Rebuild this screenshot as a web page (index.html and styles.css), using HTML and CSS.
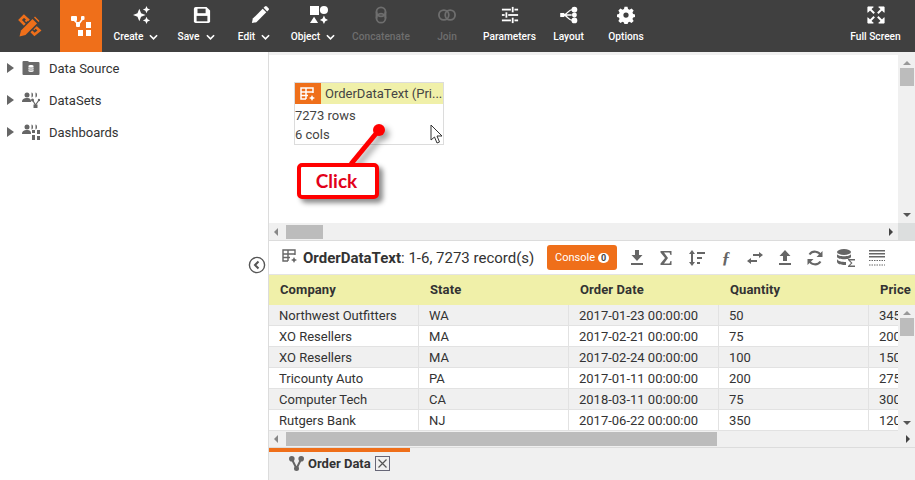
FILE: index.html
```html
<!DOCTYPE html>
<html lang="en">
<head>
<meta charset="utf-8">
<title>Order Data</title>
<link rel="stylesheet" href="styles.css">
</head>
<body>
<div class="app">
  <header class="toolbar">
    <div class="logo">
      <svg width="24" height="24" viewBox="0 0 24 24"><path d="M6 2L2 6l14.500 14.500 5-4z" fill="none" stroke="#ef6f1a" stroke-width="2.600"/><path d="M10 5L7.500 7.500M18 13l-2.500 2.500" stroke="#ef6f1a" stroke-width="2"/><path d="M0 24l1.500-8L16 1.500 23 8 8 22.500z" fill="#404040"/><path d="M1.500 22.500l1.500-6L14.500 5l4.500 4.500L7.500 21z" fill="#ef6f1a"/><path d="M16 3.500l1-1 4.500 4.500-1 1z" fill="#ef6f1a"/></svg>
    </div>
    <div class="home">
      <svg width="21" height="20" viewBox="0 0 21 20" fill="#fff"><rect x="0" y="0" width="6" height="5" rx="1"/><rect x="10" y="0" width="3.500" height="4" rx="1"/><rect x="5" y="6" width="4" height="5" rx="1"/><path d="M3 4l4 4M11.500 3L7 9" stroke="#fff" stroke-width="1.600"/><rect x="7" y="14" width="5" height="6"/><rect x="15" y="6" width="5" height="6"/><rect x="15" y="14" width="5" height="6"/></svg>
    </div>
    <div class="tools">
      <div class="tool w-create"><svg class="ti nudge" viewBox="0 0 20 20" fill="#fff"><path d="M7 3l2 5 5 2-5 2-2 5-2-5-5-2 5-2z"/><path d="M15 0l1.200 2.800L19 4l-2.800 1.200L15 8l-1.200-2.800L11 4l2.800-1.200zM15 12l1.200 2.800L19 16l-2.800 1.200L15 20l-1.200-2.800L11 16l2.800-1.200z"/></svg><span class="tl">Create <svg class="chev" viewBox="0 0 10 6"><path d="M1 1l4 4 4-4"/></svg></span></div>
      <div class="tool w-save"><svg class="ti nudge" viewBox="0 0 20 20"><path d="M3 1h12l4 4v12a2 2 0 0 1-2 2H3a2 2 0 0 1-2-2V3a2 2 0 0 1 2-2z" fill="#fff"/><rect x="5" y="3" width="9" height="5" fill="#404040"/><rect x="4" y="11" width="12" height="6" fill="#404040"/></svg><span class="tl">Save <svg class="chev" viewBox="0 0 10 6"><path d="M1 1l4 4 4-4"/></svg></span></div>
      <div class="tool w-edit"><svg class="ti nudge" viewBox="0 0 20 20" fill="#fff"><path d="M1 19l1-5L13 3l4 4L6 18z"/><path d="M14 2l1.500-1.500a1.500 1.500 0 0 1 2 0l2 2a1.500 1.500 0 0 1 0 2L18 6z"/></svg><span class="tl">Edit <svg class="chev" viewBox="0 0 10 6"><path d="M1 1l4 4 4-4"/></svg></span></div>
      <div class="tool w-object"><svg class="ti nudge" viewBox="0 0 20 20" fill="#fff"><rect x="0" y="0" width="10" height="10"/><circle cx="15.500" cy="4.500" r="4.500"/><path d="M0 19l4.500-7 4.500 7z"/><path d="M15.500 10.500l1.500 3.500 3 1.500-3 1.500-1.500 3-1.500-3-3-1.500 3-1.500z"/></svg><span class="tl">Object <svg class="chev" viewBox="0 0 10 6"><path d="M1 1l4 4 4-4"/></svg></span></div>
      <div class="tool w-conc off"><svg class="ti" viewBox="0 0 20 20" fill="none" stroke="#6e6e6e" stroke-width="2"><circle cx="10" cy="6.500" r="5"/><circle cx="10" cy="13.500" r="5"/><path d="M5 6.500v7M15 6.500v7"/></svg><span class="tl">Concatenate</span></div>
      <div class="tool w-join off"><svg class="ti" viewBox="0 0 20 20" fill="none" stroke="#6e6e6e" stroke-width="2"><circle cx="6.500" cy="10" r="5.500"/><circle cx="13.500" cy="10" r="5.500"/></svg><span class="tl">Join</span></div>
      <div class="tool w-param"><svg class="ti" viewBox="0 0 20 20" fill="#fff"><rect x="1" y="3" width="10" height="2"/><rect x="12" y="1" width="2" height="6"/><rect x="15" y="3" width="4" height="2"/><rect x="1" y="9" width="3" height="2"/><rect x="5" y="7" width="2" height="6"/><rect x="8" y="9" width="11" height="2"/><rect x="1" y="15" width="10" height="2"/><rect x="12" y="13" width="2" height="6"/><rect x="15" y="15" width="4" height="2"/></svg><span class="tl">Parameters</span></div>
      <div class="tool w-layout"><svg class="ti" viewBox="0 0 20 20" fill="none" stroke="#fff" stroke-width="1.500"><path d="M4 10C9 9 9 4 14 4M4 10c5 1 5 6 10 6M4 10h9"/><rect x="1" y="8.500" width="3" height="3" fill="#fff"/><circle cx="16" cy="4" r="2.500" fill="#fff"/><circle cx="16" cy="10" r="2" fill="#fff"/><circle cx="16" cy="16" r="2.500" fill="#fff"/></svg><span class="tl">Layout</span></div>
      <div class="tool w-opt"><svg class="ti" viewBox="0 0 24 24"><path fill="#fff" fill-rule="evenodd" d="M10 1h4l.7 3 2 .9 2.700-1.600 2.800 2.800-1.600 2.700.9 2 3 .7v3l-3 .7-.9 2 1.600 2.700-2.800 2.800-2.700-1.600-2 .9-.7 3h-4l-.7-3-2-.9-2.700 1.600-2.800-2.800 1.600-2.700-.9-2-3-.7v-3l3-.7.9-2-1.600-2.700 2.800-2.800 2.700 1.600 2-.9zM12 8.500a3.500 3.500 0 1 0 0 7 3.500 3.500 0 0 0 0-7z"/></svg><span class="tl">Options</span></div>
      <div class="tool w-full"><svg class="ti" viewBox="0 0 20 20" fill="#fff" stroke="#fff"><path d="M1 1h6L1 7z"/><path d="M3 3l5 5" stroke-width="2.200"/><path d="M19 1h-6l6 6z"/><path d="M17 3l-5 5" stroke-width="2.200"/><path d="M1 19h6l-6-6z"/><path d="M3 17l5-5" stroke-width="2.200"/><path d="M19 19h-6l6-6z"/><path d="M17 17l-5-5" stroke-width="2.200"/></svg><span class="tl">Full Screen</span></div>
    </div>
  </header>

  <div class="main">
    <aside class="sidebar">
      <div class="tree-row"><span class="caret"></span>
        <svg class="tree-icon" width="17" height="14" viewBox="0 0 17 14"><path d="M0 1a1 1 0 0 1 1-1h4l2 1h9a1 1 0 0 1 1 1v11a1 1 0 0 1-1 1H1a1 1 0 0 1-1-1z" fill="#6a6a6a"/><path d="M6 5c0-1.200 5-1.200 5 0v5c0 1.200-5 1.200-5 0z" fill="#fff"/><path d="M6 6.500c1 .8 4 .8 5 0M6 8.500c1 .8 4 .8 5 0" stroke="#6a6a6a" stroke-width=".8" fill="none"/></svg>
        <span>Data Source</span></div>
      <div class="tree-row"><span class="caret"></span>
        <svg class="tree-icon" width="18" height="16" viewBox="0 0 18 16" fill="#666"><circle cx="5" cy="3" r="2.500"/><path d="M0 10c0-3 2-4 5-4s4 1 4 4z"/><path d="M9.500 .5c2 0 2 5 0 5zM13.500 .5c2 0 2 5 0 5z"/><circle cx="10.500" cy="8" r="1.500"/><circle cx="17" cy="8" r="1.200"/><rect x="11.500" y="12.500" width="4" height="3.500"/><path d="M10.500 8l3 5M17 8l-3.500 5" stroke="#666" stroke-width="1.200"/></svg>
        <span>DataSets</span></div>
      <div class="tree-row"><span class="caret"></span>
        <svg class="tree-icon" width="18" height="16" viewBox="0 0 18 16" fill="#666"><circle cx="5" cy="3" r="2.500"/><path d="M0 10c0-3 2-4 5-4s4 1 4 4z"/><path d="M9.500 .5c2 0 2 5 0 5zM13.500 .5c2 0 2 5 0 5z"/><rect x="10" y="6" width="3" height="3"/><rect x="15" y="6" width="3" height="4"/><rect x="10" y="11" width="3" height="5"/><rect x="15" y="12" width="3" height="4"/></svg>
        <span>Dashboards</span></div>
      <svg class="collapse" width="18" height="18" viewBox="0 0 18 18" fill="none" stroke="#555"><circle cx="9" cy="9" r="7.600" stroke-width="1.400"/><path d="M10.500 5.500L7 9l3.500 3.500" stroke-width="2"/></svg>
    </aside>

    <section class="content">
      <div class="strip"></div>
      <div class="canvas">
        <div class="canvas-area">
          <div class="node">
            <div class="node-head">
              <span class="node-icon"><svg width="16" height="14" viewBox="0 0 16 14" fill="none" stroke="#fff" stroke-width="1.500"><path d="M6 12H1V1h12v5M1 5h12M1 8.500h7M6 1v11"/><path d="M12 8l1 2 2 1-2 1-1 2-1-2-2-1 2-1z" fill="#fff" stroke="none"/></svg></span>
              <span class="node-title">OrderDataText (Pri...</span>
            </div>
            <div class="node-line">7273 rows</div>
            <div class="node-line">6 cols</div>
            <svg class="cursor" width="14" height="20" viewBox="0 0 14 20"><path d="M1 1v15l3.500-3 2.500 6 2.500-1-2.500-6h5z" fill="#fff" stroke="#333"/></svg>
          </div>
          <svg class="pointer" width="50" height="50" viewBox="0 0 50 50"><path d="M42 8L14 42" stroke="#f00" stroke-width="5" fill="none"/><circle cx="42" cy="8" r="6" fill="#f00"/></svg>
          <div class="callout">Click</div>
        </div>
        <div class="vbar"><span class="arr-up"></span><span class="vthumb top"></span><span class="vfill"></span><span class="arr-down"></span></div>
        <div class="hbar"><span class="arr-left"></span><span class="hthumb small"></span><span class="hfill"></span><span class="arr-right"></span></div>
        <div class="corner"></div>
      </div>

      <div class="grid-bar">
        <svg class="gi-title" width="15" height="15" viewBox="0 0 15 15" fill="none" stroke="#666" stroke-width="1.400"><path d="M6 12H1V1h12v5M1 5h12M1 8.500h7M6 1v11"/><path d="M12 8l1 2 2 1-2 1-1 2-1-2-2-1 2-1z" fill="#666" stroke="none"/></svg>
        <div class="grid-title"><b>OrderDataText</b>: 1-6, 7273 record(s)</div>
        <div class="console">Console <span class="badge">0</span></div>
        <div class="gtools">
          <svg width="16" height="16" viewBox="0 0 16 16" fill="#666"><path d="M6 0h4v5h3.500L8 11 2.500 5H6z"/><rect x="2" y="13" width="12" height="2"/></svg>
          <svg width="14" height="16" viewBox="0 0 14 16" fill="#666"><path d="M1.500 1h11v4h-1l-1-2.500H5L9 8l-4 5.500h5.500l1-2.500h1v4h-11v-1.500L6 8 1.500 2.500z"/></svg>
          <svg width="18" height="16" viewBox="0 0 18 16" fill="#666"><path d="M5 0l3 4H6v8h2l-3 4-3-4h2V4H2z"/><rect x="10" y="2" width="8" height="2"/><rect x="10" y="7" width="5" height="2"/><rect x="10" y="12" width="3" height="2"/></svg>
          <span class="func">ƒ</span>
          <svg width="16" height="12" viewBox="0 0 16 12" fill="#666"><path d="M16 3l-4-3v2H6v2h6v2zM0 9l4 3v-2h6V8H4V6z"/></svg>
          <svg width="16" height="16" viewBox="0 0 16 16" fill="#666"><path d="M8 0l5.500 6H10v5H6V6H2.500z"/><rect x="2" y="13" width="12" height="2"/></svg>
          <svg width="16" height="16" viewBox="0 0 16 16" fill="none" stroke="#666" stroke-width="2.200"><path d="M14 6A6.500 6.500 0 0 0 2.500 4.500M2 10a6.500 6.500 0 0 0 11.500 1.500"/><path d="M15.500 1v6h-6zM.5 15V9h6z" fill="#666" stroke="none"/></svg>
          <svg width="18" height="18" viewBox="0 0 18 18" fill="#666"><ellipse cx="7" cy="3" rx="7" ry="3"/><path d="M0 5c1 3 13 3 14 0v3c-1 3-13 3-14 0zM0 10c1 3 8 3 9 3v3c-3 0-8 0-9-3z"/><path d="M11 10h7v1.500h-5l2.500 2.500-2.500 2.500h5V18h-7v-1l3-3-3-3z"/></svg>
          <svg width="16" height="16" viewBox="0 0 16 16" fill="#666"><rect y="0" width="16" height="1.500"/><rect y="3" width="16" height="1.500"/><rect y="6" width="16" height="1.500"/><g fill="none" stroke="#666" stroke-dasharray="1.500 1"><path d="M0 10.500h16M0 15h16"/></g></svg>
        </div>
      </div>

      <div class="thead">
        <div class="th">Company</div><div class="th">State</div><div class="th">Order Date</div><div class="th">Quantity</div><div class="th">Price</div>
      </div>
      <div class="tbody">
        <div class="rows">
          <div class="row odd"><div class="td">Northwest Outfitters</div><div class="td">WA</div><div class="td">2017-01-23 00:00:00</div><div class="td">50</div><div class="td">345</div></div>
          <div class="row"><div class="td">XO Resellers</div><div class="td">MA</div><div class="td">2017-02-21 00:00:00</div><div class="td">75</div><div class="td">200</div></div>
          <div class="row odd"><div class="td">XO Resellers</div><div class="td">MA</div><div class="td">2017-02-24 00:00:00</div><div class="td">100</div><div class="td">150</div></div>
          <div class="row"><div class="td">Tricounty Auto</div><div class="td">PA</div><div class="td">2017-01-11 00:00:00</div><div class="td">200</div><div class="td">275</div></div>
          <div class="row odd"><div class="td">Computer Tech</div><div class="td">CA</div><div class="td">2018-03-11 00:00:00</div><div class="td">75</div><div class="td">300</div></div>
          <div class="row"><div class="td">Rutgers Bank</div><div class="td">NJ</div><div class="td">2017-06-22 00:00:00</div><div class="td">350</div><div class="td">120</div></div>
        </div>
        <div class="vbar"><span class="arr-up"></span><span class="vthumb"></span><span class="vfill"></span><span class="arr-down"></span></div>
      </div>
      <div class="hbar wide"><span class="arr-left"></span><span class="hthumb large"></span><span class="hfill"></span><span class="arr-right"></span></div>
      <div class="tabs">
        <div class="tab">
          <svg width="15" height="15" viewBox="0 0 15 15" fill="#666"><circle cx="2.800" cy="2.800" r="2.800"/><circle cx="12.200" cy="2.800" r="2.800"/><circle cx="7.500" cy="12.500" r="2.500"/><path d="M2.800 3l4.700 9.500L12.200 3" fill="none" stroke="#666" stroke-width="2"/></svg>
          <b>Order Data</b>
          <span class="tab-x"><svg width="9" height="9" viewBox="0 0 9 9" stroke="#555" stroke-width="1.200"><path d="M0.500 0.500l8 8M8.500 0.500l-8 8"/></svg></span>
        </div>
      </div>
    </section>
  </div>
</div>
</body>
</html>
```
FILE: styles.css
```css
* { box-sizing: border-box; }
html, body { margin: 0; padding: 0; }
body { font-family: Roboto, "Liberation Sans", sans-serif; color: #333; background: #fff; }
.app { width: 915px; height: 480px; display: flex; flex-direction: column; overflow: hidden; }

.toolbar { height: 52px; background: #404040; display: flex; flex: none; }
.logo { width: 60px; display: flex; align-items: center; justify-content: center; }
.home { width: 42px; background: #ef6f1a; display: flex; align-items: center; justify-content: center; padding-bottom: 1px; }
.tools { flex: 1; display: flex; }
.tool { display: flex; flex-direction: column; align-items: center; padding-top: 6px; flex: none; }
.ti { width: 18px; height: 18px; display: block; flex: none; }
.ti.nudge { margin-left: 11px; }
.tl { font-size: 10.200px; font-weight: 500; color: #fff; margin-top: 6px; line-height: 13px; white-space: nowrap; display: flex; align-items: center; gap: 6px; }
.off .tl { color: #6e6e6e; }
.chev { width: 9px; height: 6px; fill: none; stroke: #fff; stroke-width: 1.800; }
.w-create { width: 44px; margin-left: 12px; }
.w-save { width: 36px; margin-left: 20px; }
.w-edit { width: 30px; margin-left: 25px; }
.w-object { width: 42px; margin-left: 23px; }
.w-conc { width: 58px; margin-left: 18px; }
.w-join { width: 20px; margin-left: 27px; }
.w-param { width: 53px; margin-left: 26px; }
.w-layout { width: 31px; margin-left: 17px; }
.w-opt { width: 36px; margin-left: 24px; }
.w-full { width: 51px; margin-left: auto; margin-right: 14px; }

.main { flex: 1; display: flex; min-height: 0; }
.sidebar { width: 269px; flex: none; border-right: 1px solid #dcdcdc; position: relative; background: #fff; }
.tree-row { height: 32px; display: flex; align-items: center; font-size: 13px; color: #333; padding-left: 7px; }
.caret { width: 0; height: 0; border-left: 7px solid #666; border-top: 5px solid transparent; border-bottom: 5px solid transparent; margin-right: 8px; }
.tree-icon { width: 18px; margin-right: 9px; flex: none; }
.collapse { position: absolute; left: 248px; top: 204px; }

.content { flex: 1; min-width: 0; display: flex; flex-direction: column; background: #f0f0f0; }
.strip { height: 3px; background: #f0f0f0; flex: none; }
.canvas { height: 185px; flex: none; display: grid; grid-template-columns: 1fr 17px; grid-template-rows: 1fr 17px; background: #fff; }
.canvas-area { position: relative; }
.node { position: absolute; left: 25px; top: 27px; width: 150px; height: 63px; border: 1px solid #dcdcdc; background: #fff; font-size: 13px; color: #444; }
.node-head { display: flex; height: 21px; background: #f0f0a9; margin-bottom: 2px; }
.node-icon { width: 26px; background: #ef6f1a; display: flex; align-items: center; justify-content: center; }
.node-title { padding-left: 4px; line-height: 21px; white-space: nowrap; }
.node-line { height: 19px; line-height: 19px; }
.cursor { position: absolute; left: 135px; top: 41px; }
.pointer { position: absolute; left: 68px; top: 67px; filter: drop-shadow(4px 4px 3px rgba(0,0,0,.4)); }
.callout { position: absolute; left: 28px; top: 108px; width: 82px; height: 36px; border: 4px solid #f00; border-radius: 5px; background: #fff; color: #e2001a; font: 700 19px/27px Lato, sans-serif; text-align: center; padding-right: 3px; box-shadow: 4px 4px 5px rgba(0,0,0,.45); }

.vbar { background: #f0f0f0; display: flex; flex-direction: column; align-items: center; padding-top: 6px; width: 17px; flex: none; }
.vthumb { width: 14px; height: 18px; background: #bcbcbc; margin-top: 3px; }
.vthumb.top { height: 18px; }
.vfill { flex: 1; }
.arr-up { width: 0; height: 0; border-bottom: 4px solid #999; border-left: 4px solid transparent; border-right: 4px solid transparent; }
.arr-down { width: 0; height: 0; border-top: 4px solid #555; border-left: 4px solid transparent; border-right: 4px solid transparent; margin-bottom: 6px; }
.hbar { background: #f0f0f0; display: flex; align-items: center; height: 17px; padding-left: 5px; }
.hbar.wide { flex: none; border-bottom: 1px solid #dcdcdc; height: 17px; }
.arr-left { width: 0; height: 0; border-right: 4px solid #888; border-top: 4px solid transparent; border-bottom: 4px solid transparent; }
.arr-right { width: 0; height: 0; border-left: 4px solid #444; border-top: 4px solid transparent; border-bottom: 4px solid transparent; margin-right: 5px; }
.hthumb { height: 14px; background: #bcbcbc; margin-left: 8px; }
.hthumb.small { width: 37px; }
.hthumb.large { width: 431px; }
.hfill { flex: 1; }
.corner { background: #dcdede; }

.grid-bar { height: 35px; flex: none; background: #fff; border-top: 1px solid #dcdcdc; border-bottom: 1px solid #e4e4e4; display: flex; align-items: center; padding-left: 13px; overflow: hidden; }
.gi-title { flex: none; margin-right: 6px; margin-top: -2px; }
.grid-title { font-size: 15px; color: #333; white-space: nowrap; width: 244px; }
.console { flex: none; width: 70px; height: 25px; background: #ef6f1a; border-radius: 3px; color: #fff; font-size: 11px; display: flex; align-items: center; justify-content: center; gap: 3px; }
.badge { background: #fff; color: #444; font-size: 9px; font-weight: 700; border-radius: 5px; width: 11px; height: 10px; line-height: 10px; text-align: center; }
.gtools { display: flex; align-items: center; margin-left: 12px; gap: 14px; }
.gtools svg { flex: none; }
.func { width: 14px; text-align: center; font: italic 700 17px/16px "Liberation Serif", serif; color: #666; }

.thead { height: 30px; flex: none; background: #f0f0a9; display: flex; }
.th { width: 150px; flex: none; font-size: 13px; font-weight: 700; line-height: 29px; padding-left: 11px; color: #333; letter-spacing: .1px; white-space: nowrap; }
.tbody { height: 126px; flex: none; display: flex; background: #fff; }
.rows { flex: 1; min-width: 0; overflow: hidden; }
.row { height: 21px; display: flex; background: #fff; border-bottom: 1px solid #e2e2e2; }
.row.odd { background: #f0f0f0; }
.td { width: 150px; flex: none; font-size: 13px; line-height: 21px; padding-left: 10px; border-right: 1px solid #e2e2e2; color: #333; white-space: nowrap; }

.tabs { flex: 1; background: #f0f0f0; }
.tab { width: 141px; height: 100%; border-top: 4px solid #ef6f1a; display: flex; align-items: center; padding: 0 0 6px 20px; font-size: 13px; gap: 4px; }
.tab-x { width: 15px; height: 15px; border: 1px solid #667; display: flex; align-items: center; justify-content: center; }
```
